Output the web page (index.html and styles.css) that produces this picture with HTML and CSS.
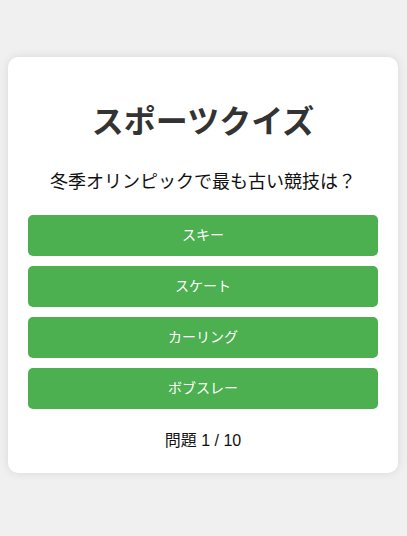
FILE: index.html
```html
<!DOCTYPE html>
<html lang="ja">
<head>
<meta charset="utf-8">
<title>スポーツクイズ</title>
<link rel="stylesheet" href="styles.css">
</head>
<body>
<main class="card">
  <h1 class="title">スポーツクイズ</h1>
  <p class="question">冬季オリンピックで最も古い競技は？</p>
  <div class="options">
    <button class="option">スキー</button>
    <button class="option">スケート</button>
    <button class="option">カーリング</button>
    <button class="option">ボブスレー</button>
  </div>
  <p class="progress">問題 1 / 10</p>
</main>
</body>
</html>
```
FILE: styles.css
```css
html, body {
  margin: 0;
}
body {
  background: #f0f0f0;
  padding: 57px 8px;
  font-family: "Liberation Sans", "Noto Sans CJK JP", sans-serif;
  color: #222;
}
.card {
  max-width: 390px;
  box-sizing: border-box;
  background: #fff;
  border-radius: 10px;
  box-shadow: 0 0 10px rgba(0, 0, 0, 0.1);
  padding: 20px;
  text-align: center;
}
.title {
  margin: 22px 0 0;
  font-size: 32px;
  line-height: 46px;
  font-weight: bold;
  color: #333;
}
.question {
  margin: 24px 0 20px;
  font-size: 18px;
  line-height: 26px;
  color: #111;
}
.options {
  display: flex;
  flex-direction: column;
  gap: 10px;
}
.option {
  height: 41px;
  padding: 0 0 4px;
  border: none;
  border-radius: 5px;
  background: #4caf50;
  color: #fff;
  font-family: "Liberation Sans", "Noto Sans CJK JP", sans-serif;
  font-size: 14px;
  font-weight: normal;
  cursor: pointer;
}
.progress {
  margin: 20px 0 0;
  font-size: 16px;
  line-height: 24px;
  color: #111;
}
```
